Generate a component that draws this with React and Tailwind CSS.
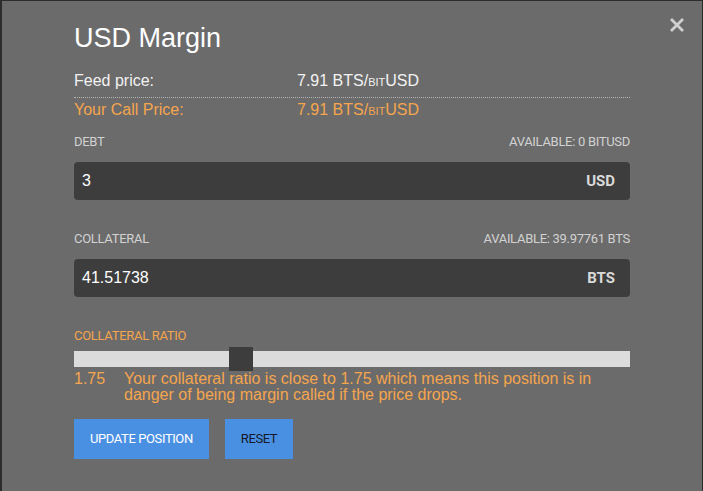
import { useState } from 'react'

const ORANGE = 'text-[#f5a54e]'
const condensed = "font-['Roboto',sans-serif]"

function Price({ value }) {
  return (
    <span>
      {value} BTS/<span className="[font-variant-caps:small-caps]">bit</span>USD
    </span>
  )
}

function AmountField({ label, available, value, asset }) {
  return (
    <div className="flex flex-col">
      <div className={`flex justify-between text-[13px] leading-[16px] tracking-[-0.3px] text-[#d2d2d2] ${condensed}`}>
        <span>{label}</span>
        <span>AVAILABLE: {available}</span>
      </div>
      <div className="mt-[12px] flex h-[38px] items-center justify-between rounded-[4px] bg-[#3d3d3d] pl-[8px] pr-[15px]">
        <span className="text-[16px] text-white">{value}</span>
        <span className="font-['Roboto',sans-serif] text-[15px] font-bold text-[#dadada]">{asset}</span>
      </div>
    </div>
  )
}

export default function App() {
  const [ratio] = useState(1.75)
  // handle position on the track, in px (track is 556 wide, handle 24)
  const handleLeft = 155

  return (
    <div className="flex h-[491px] w-[703px] bg-[#2c2c2c] pt-[1px] pl-[2px] font-['Liberation_Sans',Arial,sans-serif]">
      <div className="relative flex h-[490px] w-[700px] flex-col bg-[#6b6b6b] px-[72px] pt-[21px]">
        <button className="absolute right-[18px] top-[17px] text-[#d0d0d0]">
          <svg width="14" height="14" viewBox="0 0 14 14">
            <path d="M2 2 L12 12 M12 2 L2 12" stroke="currentColor" strokeWidth="2.8" strokeLinecap="square" />
          </svg>
        </button>

        <h1 className="text-[27px] leading-[32px] text-white">USD Margin</h1>

        <div className="mt-[17px] grid grid-cols-[223px_1fr] border-b border-dotted border-[#b5b5b5] pb-[6px] text-[16px] leading-[20px] text-[#f2f2f2]">
          <span>Feed price:</span>
          <Price value="7.91" />
        </div>
        <div className={`mt-[2px] grid grid-cols-[223px_1fr] text-[16px] leading-[20px] ${ORANGE}`}>
          <span>Your Call Price:</span>
          <Price value="7.91" />
        </div>

        <div className="mt-[14px]">
          <AmountField label="DEBT" available="0 BITUSD" value="3" asset="USD" />
        </div>
        <div className="mt-[31px]">
          <AmountField label="COLLATERAL" available="39.97761 BTS" value="41.51738" asset="BTS" />
        </div>

        <div className={`mt-[31px] text-[13px] leading-[16px] tracking-[-0.3px] ${condensed} ${ORANGE}`}>
          COLLATERAL RATIO
        </div>
        <div className="relative mt-[3px] h-[24px]">
          <div className="absolute left-0 right-0 top-[4px] h-[16px] bg-[#dcdcdc]" />
          <div className="absolute top-0 h-[24px] w-[24px] bg-[#3d3d3d]" style={{ left: handleLeft }} />
        </div>
        <div className={`flex text-[16px] leading-[16px] ${ORANGE}`}>
          <span className="w-[50px] shrink-0">{ratio.toFixed(2)}</span>
          <span>
            Your collateral ratio is close to 1.75 which means this position is in danger of being margin called if the
            price drops.
          </span>
        </div>

        <div className={`mt-[16px] flex gap-[16px] text-[13px] tracking-[-0.4px] ${condensed}`}>
          <button className="h-[40px] bg-[#4a90e2] px-[16px] text-white">UPDATE POSITION</button>
          <button className="h-[40px] bg-[#4a90e2] px-[16px] text-[#15192a]">RESET</button>
        </div>
      </div>
    </div>
  )
}
